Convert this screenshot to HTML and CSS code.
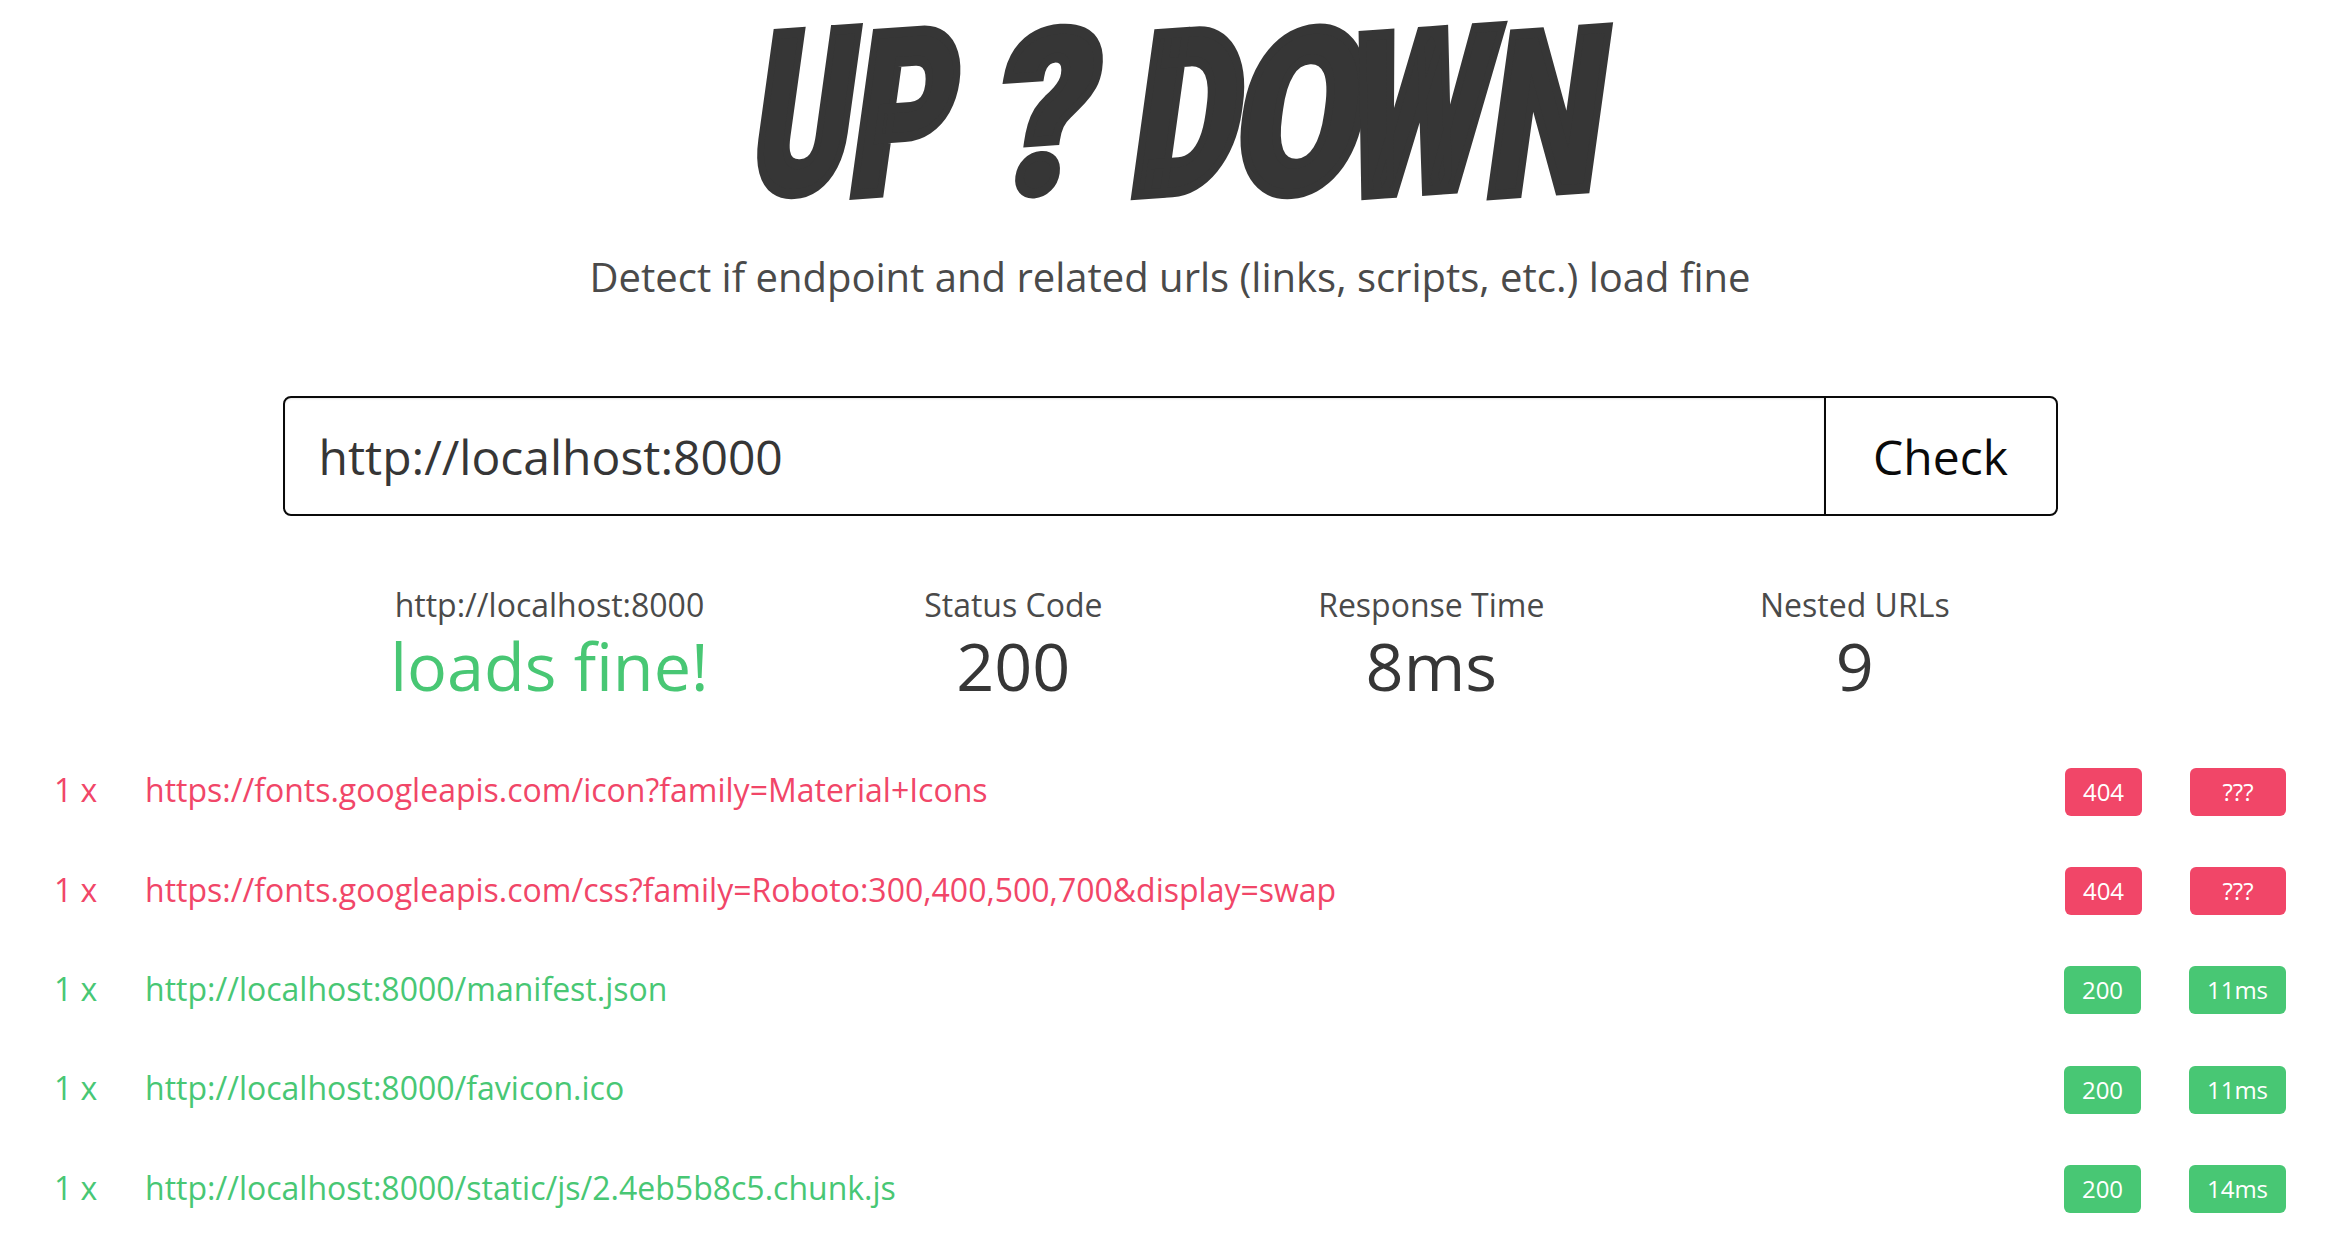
FILE: index.html
```html
<!DOCTYPE html>
<html lang="en">
<head>
  <meta charset="UTF-8" />
  <title>Up ? Down</title>
  <link rel="stylesheet" href="styles.css">
</head>
<body>
  <h1 class="logo">
    <span class="logo-letter logo-u">U</span>
    <span class="logo-letter logo-p">P</span>
    <span class="logo-letter logo-q">?</span>
    <span class="logo-letter logo-d">D</span>
    <span class="logo-letter logo-o">O</span>
    <span class="logo-letter logo-w">W</span>
    <span class="logo-letter logo-n">N</span>
  </h1>
  <p class="tagline">Detect if endpoint and related urls (links, scripts, etc.) load fine</p>

  <form class="check-form">
    <input class="check-input" type="text" value="http://localhost:8000" />
    <button class="check-button" type="button">Check</button>
  </form>

  <div class="stats">
    <div class="stat">
      <div class="stat-label">http://localhost:8000</div>
      <div class="stat-value ok">loads fine!</div>
    </div>
    <div class="stat">
      <div class="stat-label">Status Code</div>
      <div class="stat-value">200</div>
    </div>
    <div class="stat">
      <div class="stat-label">Response Time</div>
      <div class="stat-value">8ms</div>
    </div>
    <div class="stat">
      <div class="stat-label">Nested URLs</div>
      <div class="stat-value">9</div>
    </div>
  </div>

  <ul class="url-list">
    <li class="url-row bad">
      <span class="url-count">1 x</span>
      <span class="url-link">https://fonts.googleapis.com/icon?family=Material+Icons</span>
      <span class="tag">404</span>
      <span class="tag tag-time">???</span>
    </li>
    <li class="url-row bad">
      <span class="url-count">1 x</span>
      <span class="url-link">https://fonts.googleapis.com/css?family=Roboto:300,400,500,700&amp;display=swap</span>
      <span class="tag">404</span>
      <span class="tag tag-time">???</span>
    </li>
    <li class="url-row good">
      <span class="url-count">1 x</span>
      <span class="url-link">http://localhost:8000/manifest.json</span>
      <span class="tag">200</span>
      <span class="tag tag-time">11ms</span>
    </li>
    <li class="url-row good">
      <span class="url-count">1 x</span>
      <span class="url-link">http://localhost:8000/favicon.ico</span>
      <span class="tag">200</span>
      <span class="tag tag-time">11ms</span>
    </li>
    <li class="url-row good">
      <span class="url-count">1 x</span>
      <span class="url-link">http://localhost:8000/static/js/2.4eb5b8c5.chunk.js</span>
      <span class="tag">200</span>
      <span class="tag tag-time">14ms</span>
    </li>
  </ul>
</body>
</html>
```

FILE: styles.css
```css
html, body {
  height: 100%;
  overflow: hidden;
}
body {
  margin: 0;
  padding-right: 6px;
  box-sizing: border-box;
  font-family: "Open Sans", sans-serif;
  color: #363636;
  background: #fff;
}

/* logo: no comic font here, so each letter is squeezed and sheared by hand */
.logo {
  display: flex;
  justify-content: center;
  height: 226px;
  margin: 0;
  padding-left: 20px;
  font-family: Roboto, sans-serif;
  font-size: 224px;
  font-weight: 900;
  line-height: 230px;
  color: #363636;
}
.logo-letter {
  -webkit-text-stroke: 10px #363636;
  transform: skewY(-4deg) skewX(-8deg) scaleX(var(--squeeze));
}
.logo-u { --squeeze: 0.66; }
.logo-p { --squeeze: 0.7; margin-left: -47px; }
.logo-q { --squeeze: 0.87; margin-left: 12px; }
.logo-d { --squeeze: 0.74; margin-left: 12px; }
.logo-o { --squeeze: 0.82; margin-left: -37px; }
.logo-w { --squeeze: 0.74; margin-left: -56px; }
.logo-n { --squeeze: 0.72; margin-left: -48px; }

.tagline {
  margin: 24px 0 0;
  text-align: center;
  font-size: 40px;
  line-height: 54px;
  color: #4a4a4a;
}
.check-form {
  display: flex;
  width: 1775px;
  height: 120px;
  margin: 92px auto 0;
  box-sizing: border-box;
  border: 2px solid #0a0a0a;
  border-radius: 8px;
}
.check-input {
  flex: 1;
  min-width: 0;
  padding: 0 34px;
  border: none;
  border-radius: 6px 0 0 6px;
  background: none;
  box-shadow: inset 0 1px 2px rgba(10, 10, 10, 0.1);
  outline: none;
  font-family: inherit;
  font-size: 48px;
  color: #363636;
}
.check-button {
  width: 232px;
  padding: 0;
  border: none;
  border-left: 2px solid #0a0a0a;
  background: none;
  font-family: inherit;
  font-size: 48px;
  color: #0a0a0a;
}
.stats {
  display: flex;
  justify-content: space-around;
  width: 1775px;
  margin: 67px auto 0;
  text-align: center;
}
.stat-label {
  font-size: 32px;
  line-height: 44px;
  color: #4a4a4a;
}
.stat-value {
  font-size: 66.5px;
  line-height: 76px;
  color: #363636;
}
.ok {
  color: #48c774;
}
.url-list {
  list-style: none;
  margin: 37px 0 0;
  padding: 0 54px;
}
.url-row {
  display: flex;
  align-items: center;
  height: 99.4px;
  font-size: 32px;
}
.url-row.bad {
  color: #f14668;
}
.url-row.good {
  color: #48c774;
}
.url-count {
  width: 91px;
}
.url-link {
  flex: 1;
}
.tag {
  width: 77px;
  height: 48px;
  margin-top: 4px;
  line-height: 48px;
  text-align: center;
  font-size: 24px;
  color: #fff;
  border-radius: 6px;
}
.bad .tag {
  background: #f14668;
}
.good .tag {
  background: #48c774;
}
.tag-time {
  width: 96px;
  margin-left: 48px;
}
.good .tag-time {
  width: 97px;
}
```
